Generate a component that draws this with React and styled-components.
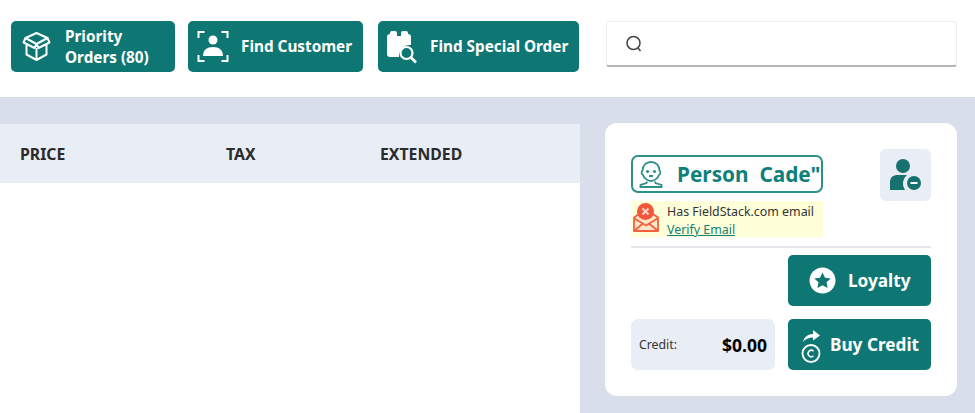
import React from "react";
import styled, { createGlobalStyle } from "styled-components";

const GlobalStyle = createGlobalStyle`
    html, body {
        margin: 0;
        padding: 0;
        background: #ffffff;
    }
    body {
        font-family: "Noto Sans", "Open Sans", sans-serif;
    }
`;

const Page = styled.div`
    width: 975px;
    height: 413px;
    display: flex;
    flex-direction: column;
    overflow: hidden;
`;

const TopBar = styled.header`
    height: 97px;
    box-sizing: border-box;
    padding: 21px 18px 0 11px;
    display: flex;
    align-items: flex-start;
    background: #ffffff;
`;

const ActionButton = styled.button`
    width: ${({ $width }) => $width}px;
    height: ${({ $height }) => $height || 51}px;
    margin-right: ${({ $gap }) => $gap || 0}px;
    flex: none;
    box-sizing: border-box;
    padding: 0 0 0 ${({ $pad }) => $pad}px;
    display: flex;
    align-items: center;
    gap: ${({ $iconGap }) => $iconGap}px;
    border: none;
    border-radius: 5px;
    background: #0f7773;
    color: #ffffff;
    font-family: inherit;
    font-size: ${({ $size }) => $size || 15.3}px;
    font-weight: 700;
    line-height: 21px;
    text-align: left;
    white-space: nowrap;
`;

const SearchBox = styled.div`
    flex: 1;
    height: 46px;
    margin-left: 27px;
    box-sizing: border-box;
    padding-left: 18px;
    display: flex;
    align-items: center;
    border-radius: 3px;
    border: 1px solid #eceef2;
    border-bottom: 2px solid #b4b4b4;
    background: #ffffff;
`;

const Workspace = styled.main`
    flex: 1;
    display: flex;
    align-items: flex-start;
    background: #d8deea;
`;

const TablePane = styled.section`
    width: 580px;
    height: 289px;
    margin-top: 27px;
    flex: none;
    background: #ffffff;
`;

const TableHead = styled.div`
    height: 59px;
    display: flex;
    align-items: center;
    background: #e9edf5;
`;

const HeadCell = styled.div`
    width: ${({ $width }) => $width}px;
    box-sizing: border-box;
    padding-left: ${({ $pad }) => $pad || 0}px;
    flex: none;
    font-size: 15.8px;
    font-weight: 700;
    color: #2b2b2b;
`;

const CustomerCard = styled.aside`
    width: 352px;
    height: 273px;
    margin: 26px 0 0 25px;
    flex: none;
    box-sizing: border-box;
    padding: 26px;
    display: flex;
    flex-direction: column;
    border-radius: 12px;
    background: #ffffff;
`;

const CustomerRow = styled.div`
    height: 98px;
    display: flex;
    justify-content: space-between;
    border-bottom: 2px solid #e2e5ea;
`;

const CustomerInfo = styled.div`
    width: 192px;
    padding-top: 6px;
`;

const NameBox = styled.div`
    height: 38px;
    box-sizing: border-box;
    padding-left: 6px;
    display: flex;
    align-items: center;
    gap: 14px;
    border: 2px solid #2f8f8b;
    border-radius: 7px;
    color: #0f7f7a;
    font-size: 20.8px;
    font-weight: 700;
    white-space: pre;
`;

const EmailNotice = styled.div`
    height: 36px;
    margin-top: 8px;
    padding-left: 2px;
    display: flex;
    gap: 8px;
    background: #fefed8;
`;

const NoticeText = styled.div`
    padding-top: 2px;
    font-size: 12.4px;
    line-height: 18px;
    color: #333333;
`;

const VerifyLink = styled.a`
    display: block;
    color: #12807b;
    text-decoration: underline;
`;

const IconTile = styled.div`
    width: 51px;
    height: 52px;
    display: flex;
    align-items: center;
    justify-content: center;
    border-radius: 6px;
    background: #e9edf5;
`;

const ButtonRow = styled.div`
    margin-top: ${({ $top }) => $top}px;
    display: flex;
    justify-content: ${({ $end }) => ($end ? "flex-end" : "space-between")};
`;

const CreditTile = styled.div`
    width: 144px;
    height: 51px;
    box-sizing: border-box;
    padding: 0 8px 0 8px;
    display: flex;
    align-items: center;
    justify-content: space-between;
    border-radius: 7px;
    background: #e9edf5;
`;

const CreditLabel = styled.span`
    font-size: 12.3px;
    color: #333333;
`;

const CreditValue = styled.span`
    font-size: 17.5px;
    font-weight: 700;
    color: #000000;
`;

function BoxIcon() {
    return (
        <svg width="29" height="31" viewBox="0 0 29 31" fill="none" stroke="#fff" strokeWidth="2" strokeLinejoin="round">
            <path d="M14.500 2 25.500 7 14.500 13 3.500 7z" />
            <path d="M3.500 7 1.500 11.500 12.500 17l2-4 2 4 11-5.500-2-4.500" />
            <path d="M4.500 14v9.500l10 5.500 10-5.500V14" />
            <path d="M14.500 17v12" />
        </svg>
    );
}

function FindPersonIcon() {
    return (
        <svg width="32" height="33" viewBox="0 0 32 33" fill="none">
            <path d="M1.500 8V2h6M24.500 2h6v6M1.500 25v6h6M24.500 31h6v-6" stroke="#fff" strokeWidth="2" />
            <circle cx="16" cy="10" r="4.500" fill="#fff" />
            <path d="M6 26c0-6 4-9 10-9s10 3 10 9z" fill="#fff" />
        </svg>
    );
}

function SpecialOrderIcon() {
    return (
        <svg width="32" height="34" viewBox="0 0 32 34">
            <path d="M1 7a3 3 0 0 1 3-3V3a2 2 0 0 1 2-2h3a2 2 0 0 1 2 2v3h4V3a2 2 0 0 1 2-2h3a2 2 0 0 1 2 2v1a3 3 0 0 1 3 3v8a11 11 0 0 0-12 12H4a3 3 0 0 1-3-3z" fill="#fff" />
            <circle cx="20.500" cy="23" r="6" fill="none" stroke="#fff" strokeWidth="2.200" />
            <path d="m25 27.500 5 5" stroke="#fff" strokeWidth="2.600" />
        </svg>
    );
}

function SearchIcon() {
    return (
        <svg width="18" height="19" viewBox="0 0 18 19" fill="none" stroke="#444" strokeWidth="1.500">
            <circle cx="8.500" cy="9" r="6.500" />
            <path d="m13 14 2.500 3" />
        </svg>
    );
}

function FaceIcon() {
    return (
        <svg width="24" height="27" viewBox="0 0 24 27" fill="none" stroke="#2f8f8b" strokeWidth="1.800">
            <path d="M12 1c5 0 8.500 3.500 8.500 8.500 1.500 1 1 4-.5 4.500-1 3-4.500 6-8 6s-7-3-8-6c-1.500-.5-2-3.500-.5-4.500C3.500 4.500 7 1 12 1z" />
            <circle cx="8.500" cy="10.500" r="1.600" fill="#2f8f8b" stroke="none" />
            <circle cx="15.500" cy="10.500" r="1.600" fill="#2f8f8b" stroke="none" />
            <path d="M10 15h4M8 20.500 7.500 22 1.500 24v2h21v-2l-6-2-.5-1.500" />
        </svg>
    );
}

function MailAlertIcon() {
    return (
        <svg width="26" height="31" viewBox="0 0 26 31">
            <path d="M1 16.500 6 13h14l5 3.500V30H1z" fill="#fde6c8" stroke="#f4603c" strokeWidth="1.800" strokeLinejoin="round" />
            <path d="M1.500 17.500 13 24.500l11.500-7M1.500 29.500l8.500-7M24.500 29.500l-8.500-7" fill="none" stroke="#f4603c" strokeWidth="1.800" />
            <circle cx="12.500" cy="10.500" r="8.500" fill="#f2573b" />
            <path d="m9.500 7.500 6 6M15.500 7.500l-6 6" stroke="#ffd9cd" strokeWidth="1.800" />
        </svg>
    );
}

function PersonMinusIcon() {
    return (
        <svg width="32" height="32" viewBox="0 0 32 32">
            <circle cx="13" cy="7" r="7" fill="#17716e" />
            <path d="M0 31v-7c0-6 3-8 8-8h9a11 11 0 0 0-2 15z" fill="#17716e" />
            <circle cx="24" cy="24" r="7" fill="#17716e" />
            <path d="M20.500 24h7" stroke="#fff" strokeWidth="2" />
        </svg>
    );
}

function StarBadgeIcon() {
    return (
        <svg width="27" height="27" viewBox="0 0 27 27">
            <circle cx="13.500" cy="13.500" r="13" fill="#fff" />
            <path d="m13.500 5.500 2.500 5.200 5.700.7-4.200 3.900 1.100 5.700-5.100-2.800-5.100 2.800 1.100-5.700-4.200-3.900 5.700-.7z" fill="#0f7773" />
        </svg>
    );
}

function BuyCreditIcon() {
    return (
        <svg width="20" height="36" viewBox="0 0 20 36" fill="none">
            <path d="M2 15c1-5 5-8 10-8V3l7 5.500-7 5V10.500c-4 0-8 1.500-10 4.500z" fill="#fff" />
            <circle cx="10" cy="26.500" r="8.500" stroke="#fff" strokeWidth="1.800" />
            <path d="M12.500 24.200a3.200 3.200 0 1 0 0 4.600" stroke="#fff" strokeWidth="1.500" />
        </svg>
    );
}

function App() {
    return (
        <Page>
            <GlobalStyle />
            <TopBar>
                <ActionButton $width={164} $gap={13} $pad={11} $iconGap={14}>
                    <BoxIcon />
                    <span>
                        Priority
                        <br />
                        Orders (80)
                    </span>
                </ActionButton>
                <ActionButton $width={175} $gap={15} $pad={9} $iconGap={12}>
                    <FindPersonIcon />
                    <span>Find Customer</span>
                </ActionButton>
                <ActionButton $width={201} $pad={8} $iconGap={12}>
                    <SpecialOrderIcon />
                    <span>Find Special Order</span>
                </ActionButton>
                <SearchBox>
                    <SearchIcon />
                </SearchBox>
            </TopBar>
            <Workspace>
                <TablePane>
                    <TableHead>
                        <HeadCell $width={226} $pad={20}>PRICE</HeadCell>
                        <HeadCell $width={154}>TAX</HeadCell>
                        <HeadCell $width={120}>EXTENDED</HeadCell>
                    </TableHead>
                </TablePane>
                <CustomerCard>
                    <CustomerRow>
                        <CustomerInfo>
                            <NameBox>
                                <FaceIcon />
                                <span>Person  Cade"</span>
                            </NameBox>
                            <EmailNotice>
                                <MailAlertIcon />
                                <NoticeText>
                                    Has FieldStack.com email
                                    <VerifyLink>Verify Email</VerifyLink>
                                </NoticeText>
                            </EmailNotice>
                        </CustomerInfo>
                        <IconTile>
                            <PersonMinusIcon />
                        </IconTile>
                    </CustomerRow>
                    <ButtonRow $end $top={7}>
                        <ActionButton $width={143} $pad={21} $iconGap={12} $size={17.2}>
                            <StarBadgeIcon />
                            <span>Loyalty</span>
                        </ActionButton>
                    </ButtonRow>
                    <ButtonRow $top={13}>
                        <CreditTile>
                            <CreditLabel>Credit:</CreditLabel>
                            <CreditValue>$0.00</CreditValue>
                        </CreditTile>
                        <ActionButton $width={143} $pad={13} $iconGap={9} $size={17.2}>
                            <BuyCreditIcon />
                            <span>Buy Credit</span>
                        </ActionButton>
                    </ButtonRow>
                </CustomerCard>
            </Workspace>
        </Page>
    );
}

export default App;
